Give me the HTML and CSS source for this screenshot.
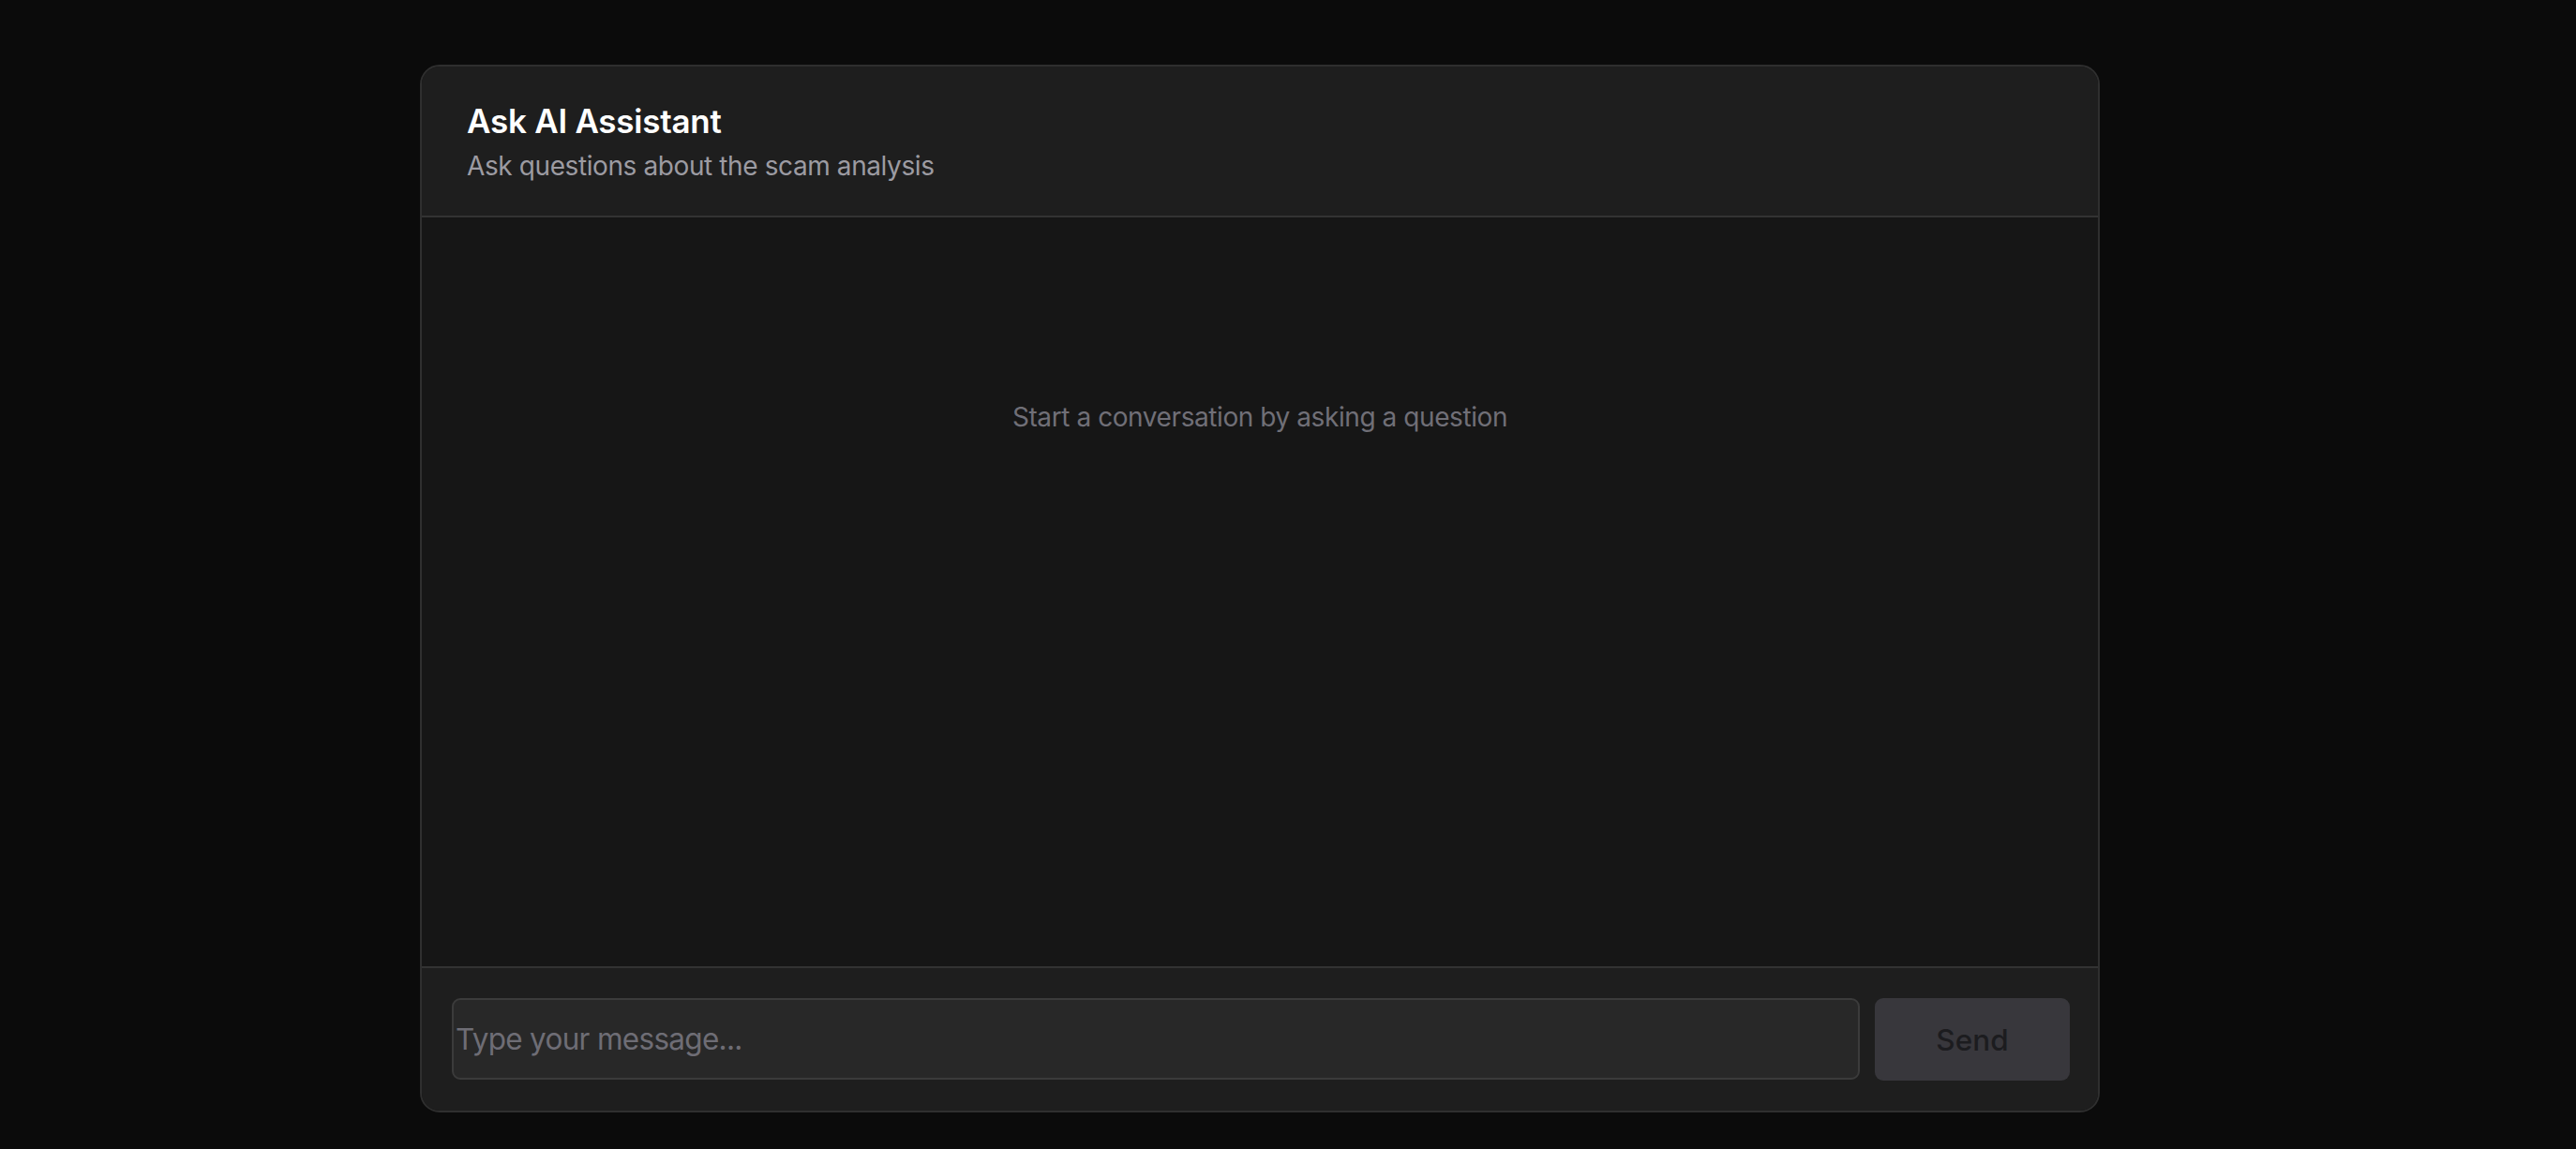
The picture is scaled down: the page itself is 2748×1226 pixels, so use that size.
FILE: index.html
```html
<!DOCTYPE html>
<html lang="en">
<head>
<meta charset="utf-8">
<title>Ask AI Assistant</title>
<link rel="stylesheet" href="styles.css">
</head>
<body>
<div class="page">
  <section class="chat-card">
    <header class="chat-header">
      <h1 class="chat-title">Ask AI Assistant</h1>
      <p class="chat-subtitle">Ask questions about the scam analysis</p>
    </header>
    <div class="chat-body">
      <p class="chat-empty">Start a conversation by asking a question</p>
    </div>
    <form class="chat-footer">
      <input class="chat-input" type="text" placeholder="Type your message...">
      <button class="chat-send" type="button">Send</button>
    </form>
  </section>
</div>
</body>
</html>
```

FILE: styles.css
```css
* {
  box-sizing: border-box;
}

html, body {
  margin: 0;
  padding: 0;
  background: #0b0b0b;
  font-family: Inter, "Noto Sans", "Liberation Sans", sans-serif;
}

.page {
  padding: 69px 0 0 448px;
  min-height: 1226px;
}

.chat-card {
  width: 1792px;
  height: 1118px;
  display: flex;
  flex-direction: column;
  border: 2px solid #2f2f2f;
  border-radius: 21px;
  background: #161616;
  overflow: hidden;
}

.chat-header {
  background: #1e1e1e;
  padding: 37px 48px 32px 48px;
  border-bottom: 2px solid #333333;
}

.chat-title {
  margin: 0 0 6px 0;
  font-size: 35px;
  line-height: 42px;
  font-weight: 600;
  letter-spacing: -0.25px;
  color: #ffffff;
}

.chat-subtitle {
  margin: 0;
  font-size: 28px;
  line-height: 42px;
  font-weight: 400;
  letter-spacing: -0.4px;
  color: #9c9ba2;
}

.chat-body {
  flex: 1;
  padding-top: 192px;
  background: #161616;
}

.chat-empty {
  margin: 0;
  text-align: center;
  font-size: 28px;
  line-height: 42px;
  letter-spacing: -0.42px;
  color: #706f77;
}

.chat-footer {
  margin: 0;
  display: flex;
  gap: 16px;
  padding: 32px 30px 32px 32px;
  background: #1e1e1e;
  border-top: 2px solid #333333;
}

.chat-input {
  flex: 1;
  height: 87px;
  padding: 0 0 0 2px;
  border: 2px solid #3b3b3b;
  border-radius: 9px;
  background: #282828;
  font-family: inherit;
  font-size: 31.5px;
  letter-spacing: -0.7px;
  color: #e5e5e5;
  outline: none;
}

.chat-input::placeholder {
  color: #6e6d75;
}

.chat-send {
  width: 208px;
  height: 88px;
  border: none;
  border-radius: 9px;
  background: #38373c;
  font-family: inherit;
  font-size: 31.5px;
  font-weight: 500;
  color: #1c1c1f;
}
```
